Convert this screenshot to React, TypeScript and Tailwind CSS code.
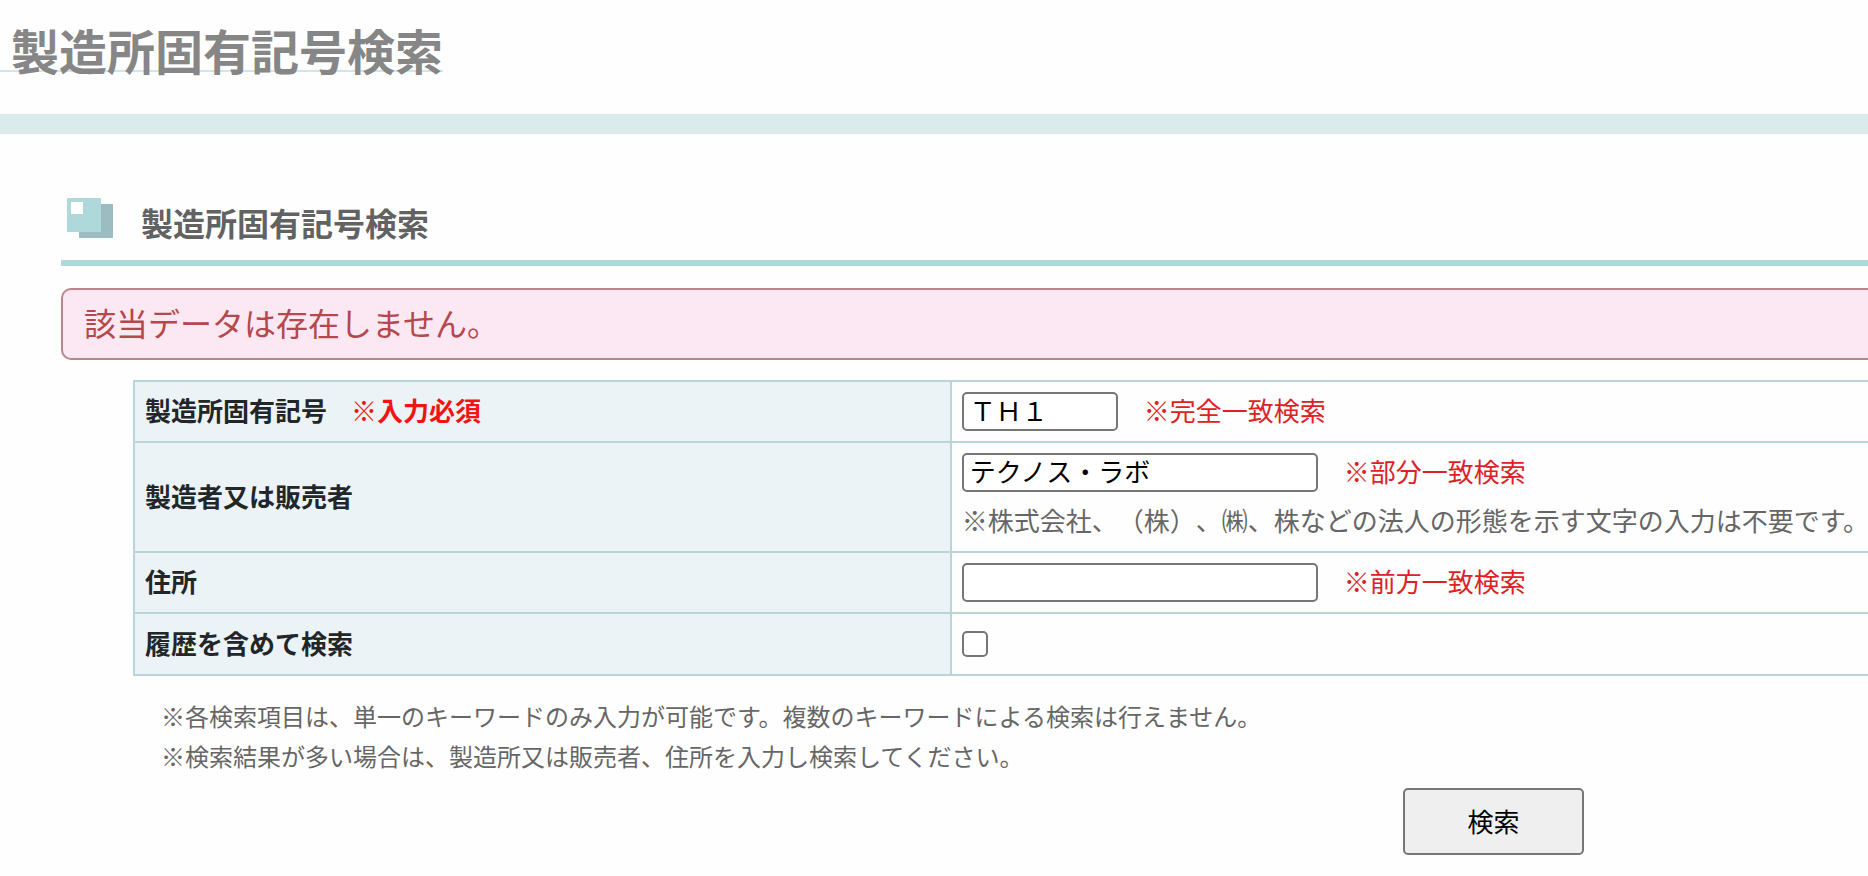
import type { ReactNode } from "react";

const PAGE_TITLE = "製造所固有記号検索";

type RowProps = {
  label: string;
  htmlFor: string;
  required?: boolean;
  children: ReactNode;
};

function FormRow({ label, htmlFor, required = false, children }: RowProps) {
  return (
    <tr>
      <th
        scope="row"
        className="border-2 border-[#b9d5d6] bg-[#ebf3f6] px-2.5 pt-2 pb-3 text-left font-bold text-[#222628]"
      >
        <div className="flex gap-6">
          <label htmlFor={htmlFor}>{label}</label>
          {required && <span className="text-[#f01414]">※入力必須</span>}
        </div>
      </th>
      <td className="border-2 border-r-0 border-[#b9d5d6] px-2.5 py-2.5 text-[#666]">{children}</td>
    </tr>
  );
}

type FieldProps = {
  id: string;
  value?: string;
  hint: string;
  short?: boolean;
};

function TextField({ id, value = "", hint, short = false }: FieldProps) {
  return (
    <div className="flex items-center gap-[26px]">
      <input
        id={id}
        name={id}
        type="text"
        defaultValue={value}
        className={`h-[39px] rounded-[5px] border-2 border-[#767676] bg-white px-1.5 pb-1 text-black ${
          short ? "w-[156px]" : "w-[356px]"
        }`}
      />
      <span className="pb-1 leading-[35px] text-[#dc2226]">{hint}</span>
    </div>
  );
}

function SectionIcon() {
  return (
    <svg width="46" height="40" viewBox="0 0 46 40" aria-hidden="true">
      <rect x="12" y="6" width="34" height="34" fill="#9bbcc0" />
      <rect x="0" y="0" width="34" height="34" fill="#afd8da" />
      <rect x="4" y="4" width="12" height="12" fill="#fff" />
    </svg>
  );
}

export default function App() {
  return (
    <div className="min-h-screen overflow-hidden bg-[#fefefe] pb-4 font-['Noto_Sans_CJK_JP',sans-serif] whitespace-nowrap [text-spacing-trim:space-all]">
      <header className="flex border-b-20 border-[#dbeaea] pb-[42px]">
        <h1 className="h-[72px] border-b-2 border-[#cfe8e7] pl-[11px] text-[48px] leading-[98px] font-bold text-[#868686]">
          {PAGE_TITLE}
        </h1>
      </header>

      <main className="pt-16 pl-[61px]">
        <div className="flex gap-7 border-b-6 border-[#afd8da] pb-[22px] pl-1.5">
          <SectionIcon />
          <h2 className="h-10 text-[32px] leading-[48px] font-bold text-[#626262]">{PAGE_TITLE}</h2>
        </div>

        <p
          role="alert"
          className="mt-[22px] rounded-l-[10px] border-2 border-r-0 border-[#b9868c] bg-[#fce8f3] px-[21px] pb-1 text-[32px] leading-[64px] text-[#b5484c]"
        >
          該当データは存在しません。
        </p>

        <form className="mt-5 pl-18 text-[26px] leading-[39px]" onSubmit={(e) => e.preventDefault()}>
          <table className="w-full table-fixed border-collapse">
            <colgroup>
              <col className="w-[47.1%]" />
              <col />
            </colgroup>
            <tbody>
              <FormRow label="製造所固有記号" htmlFor="symbol" required>
                <TextField id="symbol" value="ＴＨ１" hint="※完全一致検索" short />
              </FormRow>
              <FormRow label="製造者又は販売者" htmlFor="maker">
                <TextField id="maker" value="テクノス・ラボ" hint="※部分一致検索" />
                <p className="pt-2 pb-0.5">
                  ※株式会社、（株）、㈱、株などの法人の形態を示す文字の入力は不要です。
                </p>
              </FormRow>
              <FormRow label="住所" htmlFor="address">
                <TextField id="address" hint="※前方一致検索" />
              </FormRow>
              <FormRow label="履歴を含めて検索" htmlFor="history">
                <div className="flex h-10 items-center">
                  <input
                    id="history"
                    name="history"
                    type="checkbox"
                    className="size-[26px] appearance-none rounded-[5px] border-2 border-[#767676] bg-white checked:bg-[#767676]"
                  />
                </div>
              </FormRow>
            </tbody>
          </table>

          <div className="mt-5 pl-7 text-[24px] leading-[40px] text-[#666]">
            <p>※各検索項目は、単一のキーワードのみ入力が可能です。複数のキーワードによる検索は行えません。</p>
            <p>※検索結果が多い場合は、製造所又は販売者、住所を入力し検索してください。</p>
          </div>

          <div className="mt-3 flex justify-end pr-[284px]">
            <button
              type="submit"
              className="h-[67px] w-[181px] rounded-[5px] border-2 border-[#767676] bg-[#efefef] pb-0.5 text-black"
            >
              検索
            </button>
          </div>
        </form>
      </main>
    </div>
  );
}
